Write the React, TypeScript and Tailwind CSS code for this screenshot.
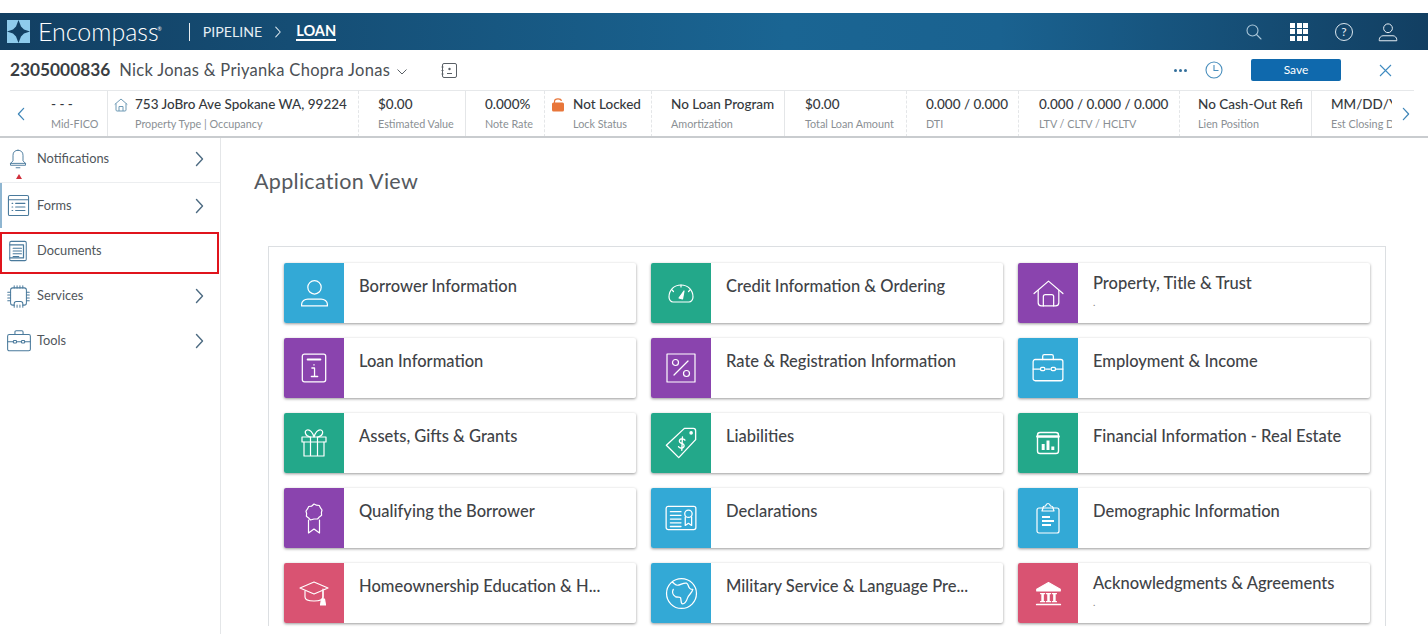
import type { ReactNode } from "react";

const font = "font-['Lato','Noto_Sans',sans-serif]";

function Glyph({ size = 32, stroke = "#fff", sw = 1.2, children }: { size?: number; stroke?: string; sw?: number; children: ReactNode }) {
  return (
    <svg width={size} height={size} viewBox="0 0 32 32" fill="none" stroke={stroke} strokeWidth={sw} strokeLinecap="round" strokeLinejoin="round">
      {children}
    </svg>
  );
}

const icons: Record<string, ReactNode> = {
  person: (
    <>
      <circle cx="16" cy="10" r="6.5" />
      <path d="M3.5 28v-1.5c0-3 3-5 6-5h13c3 0 6 2 6 5V28z" />
    </>
  ),
  gauge: (
    <>
      <path d="M8 25h16c2 0 4-2 4-5 0-7-5-12-12-12S4 13 4 20c0 3 2 5 4 5z" />
      <path d="M14 21l5-7-1.500 8z" fill="#fff" />
      <path d="M16 8v2M7 13l1.500 1.500M25 13l-1.500 1.500" />
    </>
  ),
  house: (
    <>
      <path d="M2 16 16 4l14 12" />
      <path d="M6 13v12c0 2 1 3 3 3h14c2 0 3-1 3-3V13" />
      <path d="M11 28v-9c0-1 .5-2 2-2h6c1.500 0 2 1 2 2v9" />
    </>
  ),
  info: (
    <>
      <rect x="5" y="3" width="22" height="26" rx="2" />
      <path d="M10 8h12" strokeWidth="1.800" />
      <path d="M14 16h2.500v8M13.500 24h6M16 12.800v.4" />
    </>
  ),
  percent: (
    <>
      <rect x="2" y="2" width="28" height="28" />
      <path d="M23 9 9 23" />
      <circle cx="10.500" cy="10.500" r="3" />
      <circle cx="21.500" cy="21.500" r="3" />
    </>
  ),
  briefcase: (
    <>
      <rect x="2" y="8" width="28" height="20" rx="2" />
      <path d="M11 8V5c0-1 .5-1.500 1.500-1.500h7c1 0 1.500.5 1.500 1.500v3" />
      <path d="M2 17h7M14 17h4M23 17h7" />
      <rect x="9" y="15.500" width="4" height="3" rx="1" />
      <rect x="19" y="15.500" width="4" height="3" rx="1" />
    </>
  ),
  gift: (
    <>
      <rect x="4" y="10" width="24" height="5" />
      <path d="M6 15v14h20V15M12.500 10v19M19.500 10v19" />
      <path d="M12 10C7 9 6 4 9 3c3-1 6 3 7 7 1-4 4-8 7-7 3 1 2 6-3 7" />
    </>
  ),
  tag: (
    <>
      <path d="M19 3h8c1.200 0 2 .8 2 2v8L14 29 3 18z" />
      <circle cx="25" cy="7" r="1" fill="#fff" />
      <path d="M19.500 13.500c-.8-1.300-2.800-1.700-4-.9-1.500 1-1.200 2.800.4 3.400l1.500.6c1.600.6 1.900 2.500.4 3.500-1.200.8-3.200.4-4-.9M17.300 10.500l-.6 12" />
    </>
  ),
  chart: (
    <>
      <rect x="4" y="4" width="24" height="24" rx="3" strokeWidth="1.600" />
      <path d="M4 8.500h24" strokeWidth="3" />
      <path d="M10.500 24v-7M16 24V13M21.500 24v-4" strokeWidth="3.400" strokeLinecap="butt" />
    </>
  ),
  ribbon: (
    <>
      <path d="M16 2l2.500 1.200 2.800.3 1.200 2.400 1.500 2.100-.6 2.600.2 2.700-2.200 1.600-1.800 2.100L16 17l-3.600 1-1.800-2.100-2.200-1.600.2-2.700-.6-2.600 1.500-2.100 1.200-2.400 2.800-.3z" />
      <path d="M10.500 18v13l5.500-4 5.500 4V18" />
    </>
  ),
  certificate: (
    <>
      <rect x="2" y="5" width="28" height="22" rx="2" />
      <path d="M6 10h10M6 13.500h10M6 17h10M6 20.500h10M6 24h10" />
      <circle cx="23" cy="12" r="3.500" />
      <path d="M20 15v8l3-2 3 2v-8" />
    </>
  ),
  clipboard: (
    <>
      <rect x="5" y="6" width="22" height="25" rx="2" />
      <path d="M11 6c0-1.500 1-2 2.500-2C14 2.500 15 1.500 16 1.500s2 1 2.500 2.500C20 4 21 4.500 21 6l1 3H10z" />
      <path d="M10 15h8M10 19h12M10 23h9" strokeWidth="2" strokeLinecap="butt" />
    </>
  ),
  cap: (
    <>
      <path d="M2 11 16 5l14 6-14 6z" />
      <path d="M7 14v6c0 3 5 4 9 4s9-1 9-4v-6" />
      <path d="M25 12v10" />
      <path d="M23.500 22h3l1 6h-5z" fill="#fff" />
    </>
  ),
  globe: (
    <>
      <circle cx="16" cy="16" r="14.500" />
      <path d="M7 5c2 1 3 3 5 3 3 0 6-3 9-2 2 1 1 3 3 5 1 1 2 1 3 1-1 4-4 5-5 8-1 3-2 6-5 6-2 0-1-4-2-6-1-1-3 0-5-1-3-2-3-5-2-7" />
    </>
  ),
  bank: (
    <>
      <path d="M16 3 2 11v2h28v-2z" fill="#fff" />
      <path d="M6 15.500h6v1.500h-1.500v8H12v1.500H6V25h1.500v-8H6zM13 15.500h6v1.500h-1.500v8H19v1.500h-6V25h1.500v-8H13zM20 15.500h6v1.500h-1.500v8H26v1.500h-6V25h1.500v-8H20z" fill="#fff" stroke="none" />
      <path d="M2 29h28" strokeWidth="2" />
    </>
  ),
};

const blue = "bg-[#33a9d6]";
const purple = "bg-[#8a44ae]";
const green = "bg-[#23a88a]";
const pink = "bg-[#d95372]";

const cards: { title: string; color: string; icon: string; size: number; sub?: boolean }[] = [
  { title: "Borrower Information", color: blue, icon: "person", size: 33 },
  { title: "Credit Information & Ordering", color: green, icon: "gauge", size: 32 },
  { title: "Property, Title & Trust", color: purple, icon: "house", size: 33, sub: true },
  { title: "Loan Information", color: purple, icon: "info", size: 34 },
  { title: "Rate & Registration Information", color: purple, icon: "percent", size: 32 },
  { title: "Employment & Income", color: blue, icon: "briefcase", size: 34 },
  { title: "Assets, Gifts & Grants", color: green, icon: "gift", size: 32 },
  { title: "Liabilities", color: green, icon: "tag", size: 36 },
  { title: "Financial Information - Real Estate", color: green, icon: "chart", size: 28 },
  { title: "Qualifying the Borrower", color: purple, icon: "ribbon", size: 32 },
  { title: "Declarations", color: blue, icon: "certificate", size: 34 },
  { title: "Demographic Information", color: blue, icon: "clipboard", size: 32 },
  { title: "Homeownership Education & H...", color: pink, icon: "cap", size: 32 },
  { title: "Military Service & Language Pre...", color: blue, icon: "globe", size: 33 },
  { title: "Acknowledgments & Agreements", color: pink, icon: "bank", size: 27, sub: true },
];

function Card({ title, color, icon, size, sub }: (typeof cards)[number]) {
  return (
    <div className="flex h-[60px] overflow-hidden rounded-[2px] bg-white shadow-[0_1px_3px_rgba(0,0,0,0.4)]">
      <div className={`flex w-[60px] shrink-0 items-center justify-center ${color}`}>
        <Glyph size={size}>{icons[icon]}</Glyph>
      </div>
      <div className={`whitespace-nowrap pl-[15px] text-[16.5px] font-medium leading-[20px] text-[#3f4347] ${sub ? "pt-[10px]" : "pt-[13px]"}`}>
        {title}
        {sub && <div className="text-[10px] leading-[18px] text-[#888]">.</div>}
      </div>
    </div>
  );
}

function Chevron({ className = "", dir = "right", color = "#4d6b82" }: { className?: string; dir?: "left" | "right"; color?: string }) {
  return (
    <svg width="9" height="16" viewBox="0 0 9 16" fill="none" stroke={color} strokeWidth="1.400" strokeLinecap="round" strokeLinejoin="round" className={className}>
      <path d={dir === "right" ? "M1.500 1.500 7.500 8l-6 6.500" : "M7.500 1.500 1.500 8l6 6.500"} />
    </svg>
  );
}

type Info = { value: string; label: string; width: number; pad: number; edge: string; lead?: ReactNode };

const homeIcon = (
  <svg width="14" height="14" viewBox="0 0 14 14" fill="none" stroke="#6f9ab5" strokeWidth="1" className="mr-[7px] shrink-0">
    <path d="M.7 6.500 7 1l6.300 5.500M2 5.500V12c0 .6.4 1 1 1h8c.6 0 1-.4 1-1V5.500M5 13V8.500h4V13" />
  </svg>
);

const lockIcon = (
  <svg width="12" height="14" viewBox="0 0 12 14" fill="none" className="mr-[9px] shrink-0">
    <path d="M2.500 5.500V3.500C2.500 1.500 4 .8 6 .8s3.200.6 3.500 2" stroke="#e8763a" strokeWidth="1.200" />
    <rect x="0" y="4.500" width="12" height="9" rx="1.500" fill="#e8763a" />
  </svg>
);

const solid = "border-r border-[#e4e6e8]";
const dashed = "border-r border-dashed border-[#e4e6e8]";

const infos: Info[] = [
  { value: "- - -", label: "Mid-FICO", width: 68, pad: 11, edge: solid },
  { value: "753 JoBro Ave Spokane WA, 99224", label: "Property Type | Occupancy", width: 251, pad: 6, edge: dashed, lead: homeIcon },
  { value: "$0.00", label: "Estimated Value", width: 107, pad: 19, edge: solid },
  { value: "0.000%", label: "Note Rate", width: 79, pad: 19, edge: dashed },
  { value: "Not Locked", label: "Lock Status", width: 107, pad: 7, edge: dashed, lead: lockIcon },
  { value: "No Loan Program", label: "Amortization", width: 133, pad: 19, edge: solid },
  { value: "$0.00", label: "Total Loan Amount", width: 122, pad: 20, edge: dashed },
  { value: "0.000 / 0.000", label: "DTI", width: 112, pad: 19, edge: dashed },
  { value: "0.000 / 0.000 / 0.000", label: "LTV / CLTV / HCLTV", width: 161, pad: 20, edge: dashed },
  { value: "No Cash-Out Refi", label: "Lien Position", width: 132, pad: 18, edge: solid },
  { value: "MM/DD/YYYY", label: "Est Closing Date", width: 80, pad: 19, edge: "" },
];

function InfoCell({ value, label, width, pad, edge, lead }: Info) {
  return (
    <div className={`h-[46px] shrink-0 overflow-hidden ${edge}`} style={{ width, paddingLeft: pad }}>
      <div className="flex items-center whitespace-nowrap pt-[5px] text-[13.5px] font-medium leading-[17px] text-[#35393d]">
        {lead}
        {value}
      </div>
      <div className={`whitespace-nowrap pt-[4px] text-[10.8px] leading-[13px] text-[#8a8f94] ${lead ? "pl-[21px]" : ""}`}>{label}</div>
    </div>
  );
}

const navStroke = "#4a7a9c";

const nav: { label: string; arrow: boolean; row: string; box: string; icon: ReactNode }[] = [
  {
    label: "Notifications",
    arrow: true,
    row: "w-[220px] h-[45px] border-b border-[#eceef0] pb-[2px] pl-[8px] pr-[16px]",
    box: "w-[29px]",
    icon: (
      <div className="relative">
        <Glyph size={20} stroke={navStroke} sw={1.500}>
          <path d="M16 2c-5 0-8 3-8 8v9l-4 4v3h24v-3l-4-4v-9c0-5-3-8-8-8z" />
          <path d="M4 23h24M13 30h6" />
        </Glyph>
        <div className="absolute left-[8px] top-[25px] h-0 w-0 border-x-[3px] border-b-[5px] border-x-transparent border-b-[#d0303c]" />
      </div>
    ),
  },
  {
    label: "Forms",
    arrow: true,
    row: "w-[220px] h-[45px] border-l-2 border-[#8fb6d1] pl-[5px] pr-[16px]",
    box: "w-[30px]",
    icon: (
      <Glyph size={23} stroke={navStroke} sw={1.500}>
        <rect x="2" y="2" width="28" height="28" rx="2" />
        <path d="M2 8h28M7 13h1M12 13h13M7 18h1M12 18h13M7 23h1M12 23h13" />
      </Glyph>
    ),
  },
  {
    label: "Documents",
    arrow: false,
    row: "w-[219px] mt-[4px] h-[42px] border-2 border-[#e0141c] pb-[5px] pl-[5px] pr-[16px]",
    box: "w-[30px]",
    icon: (
      <Glyph size={22} stroke={navStroke} sw={1.500}>
        <rect x="4" y="2" width="24" height="28" rx="2" />
        <path d="M4 7h20v19H4M9 12h12M9 16h12M9 20h12M9 24h8" strokeWidth="1.800" />
      </Glyph>
    ),
  },
  {
    label: "Services",
    arrow: true,
    row: "w-[220px] mt-[1px] h-[42px] pl-[7px] pr-[16px]",
    box: "w-[30px]",
    icon: (
      <Glyph size={23} stroke={navStroke} sw={1.400}>
        <path d="M8 4h16c2 0 3 1 3 3v18c0 2-1 3-3 3h-2v-2c0-2-1-3-3-3h-6c-2 0-3 1-3 3v2H8c-2 0-3-1-3-3V7c0-2 1-3 3-3z" />
        <path d="M10 1v3M14 1v3M18 1v3M22 1v3M1 10h4M1 14h4M1 18h4M1 22h4M27 10h4M27 14h4M27 18h4M27 22h4M10 28v3M14 28v3M18 28v3M22 28v3" />
      </Glyph>
    ),
  },
  {
    label: "Tools",
    arrow: true,
    row: "w-[220px] mt-[3px] h-[42px] pl-[6px] pr-[16px]",
    box: "w-[31px]",
    icon: (
      <Glyph size={26} stroke={navStroke} sw={1.300}>
        {icons.briefcase}
      </Glyph>
    ),
  },
];

export default function App() {
  return (
    <div className={`h-[634px] w-[1428px] overflow-hidden bg-white pt-[13px] ${font}`}>
      <header className="flex h-[37px] items-center bg-[linear-gradient(90deg,#123f62_0%,#1a6593_55%,#1a6290_70%,#123f62_100%)] pl-[7px] pr-[30px] text-white">
        <svg width="23" height="23" viewBox="0 0 23 23" className="shrink-0">
          <rect width="23" height="23" fill="#8ecbec" />
          <path d="M11.500 0 14 6.500 17 9.500 23 11.500 17 13.500 14 16.500 11.500 23 9 16.500 6 13.500 0 11.500 6 9.500 9 6.500z" fill="#123f62" />
        </svg>
        <span className="ml-[8px] text-[25px] font-light leading-none">Encompass</span>
        <sup className="-ml-px text-[5px]">®</sup>
        <div className="ml-[27px] h-[18px] w-px bg-white/90" />
        <span className="ml-[13px] text-[14.2px] text-[#e4edf3]">PIPELINE</span>
        <Chevron className="ml-[12px] h-[12px] w-[8px]" color="#dbe7ef" />
        <span className="ml-[14px] border-b-2 border-white text-[14.5px] font-bold leading-[17px]">LOAN</span>
        <div className="ml-auto flex items-center">
          <svg width="16" height="16" viewBox="0 0 16 16" fill="none" stroke="#a9c6d9" strokeWidth="1.100" strokeLinecap="round">
            <circle cx="6.500" cy="6.500" r="5.500" />
            <path d="M10.500 10.500 15 15" />
          </svg>
          <div className="ml-[28px] grid grid-cols-3 gap-[1.5px]">
            {Array.from({ length: 9 }).map((_, i) => (
              <div key={i} className="h-[5px] w-[5px] bg-white" />
            ))}
          </div>
          <div className="ml-[27px] flex h-[18px] w-[18px] items-center justify-center rounded-full border border-[#dbe7ef] text-[12px] leading-none text-[#e6eef4]">?</div>
          <svg width="20" height="20" viewBox="0 0 32 32" fill="none" stroke="#e6eef4" strokeWidth="1.600" className="ml-[25px]">
            <circle cx="16" cy="10" r="7" />
            <path d="M2 30v-2c0-3 3-6 6-6h16c3 0 6 3 6 6v2z" />
          </svg>
        </div>
      </header>

      <div className="flex h-[40px] items-center pl-[10px] pr-[36px]">
        <span className="text-[17.3px] font-bold text-[#3a3e42]">2305000836</span>
        <span className="ml-[9px] text-[16.5px] tracking-[0.3px] text-[#4b5055]">Nick Jonas &amp; Priyanka Chopra Jonas</span>
        <svg width="10" height="6" viewBox="0 0 10 6" fill="none" stroke="#5a6066" className="ml-[7px] mt-[3px]">
          <path d="M.5.5 5 5 9.500.5" />
        </svg>
        <svg width="17" height="17" viewBox="0 0 17 17" fill="none" stroke="#5a6066" className="ml-[34px]">
          <rect x="1.500" y="1.500" width="14" height="14" rx="1.500" />
          <circle cx="8.500" cy="7" r="1.200" fill="#5a6066" stroke="none" />
          <path d="M6 11.500h5M.5 5h2M.5 8.500h2M.5 12h2" />
        </svg>
        <div className="ml-auto flex items-center">
          <div className="flex gap-[2px]">
            <div className="h-[3px] w-[3px] rounded-full bg-[#336f9b]" />
            <div className="h-[3px] w-[3px] rounded-full bg-[#336f9b]" />
            <div className="h-[3px] w-[3px] rounded-full bg-[#336f9b]" />
          </div>
          <svg width="18" height="18" viewBox="0 0 18 18" fill="none" stroke="#4a8fbd" strokeWidth="1.100" className="ml-[18px]">
            <circle cx="9" cy="9" r="8" />
            <path d="M9 4v5.500h4.500" />
          </svg>
          <button className="ml-[28px] h-[22px] w-[90px] rounded-[2px] bg-[#0f69ad] text-[12px] text-white">Save</button>
          <svg width="13" height="13" viewBox="0 0 13 13" fill="none" stroke="#3f8bc0" strokeWidth="1.100" className="ml-[38px]">
            <path d="M1 1l11 11M12 1 1 12" />
          </svg>
        </div>
      </div>

      <div className="ml-[10px] mr-[14px] h-px bg-[#e6e8ea]" />

      <div className="flex h-[47px] border-b-2 border-[#c9cccf]">
        <div className="flex w-[40px] shrink-0 items-center pl-[17px]">
          <Chevron dir="left" color="#3f86b8" className="h-[14px] w-[8px]" />
        </div>
        <div className="flex w-[1352px] shrink-0 overflow-hidden">
          {infos.map((info) => (
            <InfoCell key={info.label} {...info} />
          ))}
        </div>
        <div className="flex flex-1 items-center pl-[10px]">
          <Chevron color="#3f86b8" className="h-[14px] w-[8px]" />
        </div>
      </div>

      <div className="flex">
        <aside className="h-[497px] w-[221px] shrink-0 border-r border-[#e4e6e8]">
          {nav.map((item) => (
            <div key={item.label} className={`flex items-center ${item.row} text-[12.8px] text-[#50565b]`}>
              <div className={`flex shrink-0 items-center ${item.box}`}>{item.icon}</div>
              <span>{item.label}</span>
              {item.arrow && <Chevron className="ml-auto" />}
            </div>
          ))}
        </aside>

        <main className="min-w-0 flex-1 pl-[33px]">
          <h1 className="pt-[31px] text-[21.5px] leading-[24px] tracking-[0.3px] text-[#55595e]">Application View</h1>
          <div className="ml-[14px] mt-[53px] grid w-[1118px] grid-cols-[repeat(3,352px)] gap-[15px] border border-b-0 border-[#dcdfe2] px-[15px] pb-[3px] pt-[16px]">
            {cards.map((card) => (
              <Card key={card.title} {...card} />
            ))}
          </div>
        </main>
      </div>
    </div>
  );
}
